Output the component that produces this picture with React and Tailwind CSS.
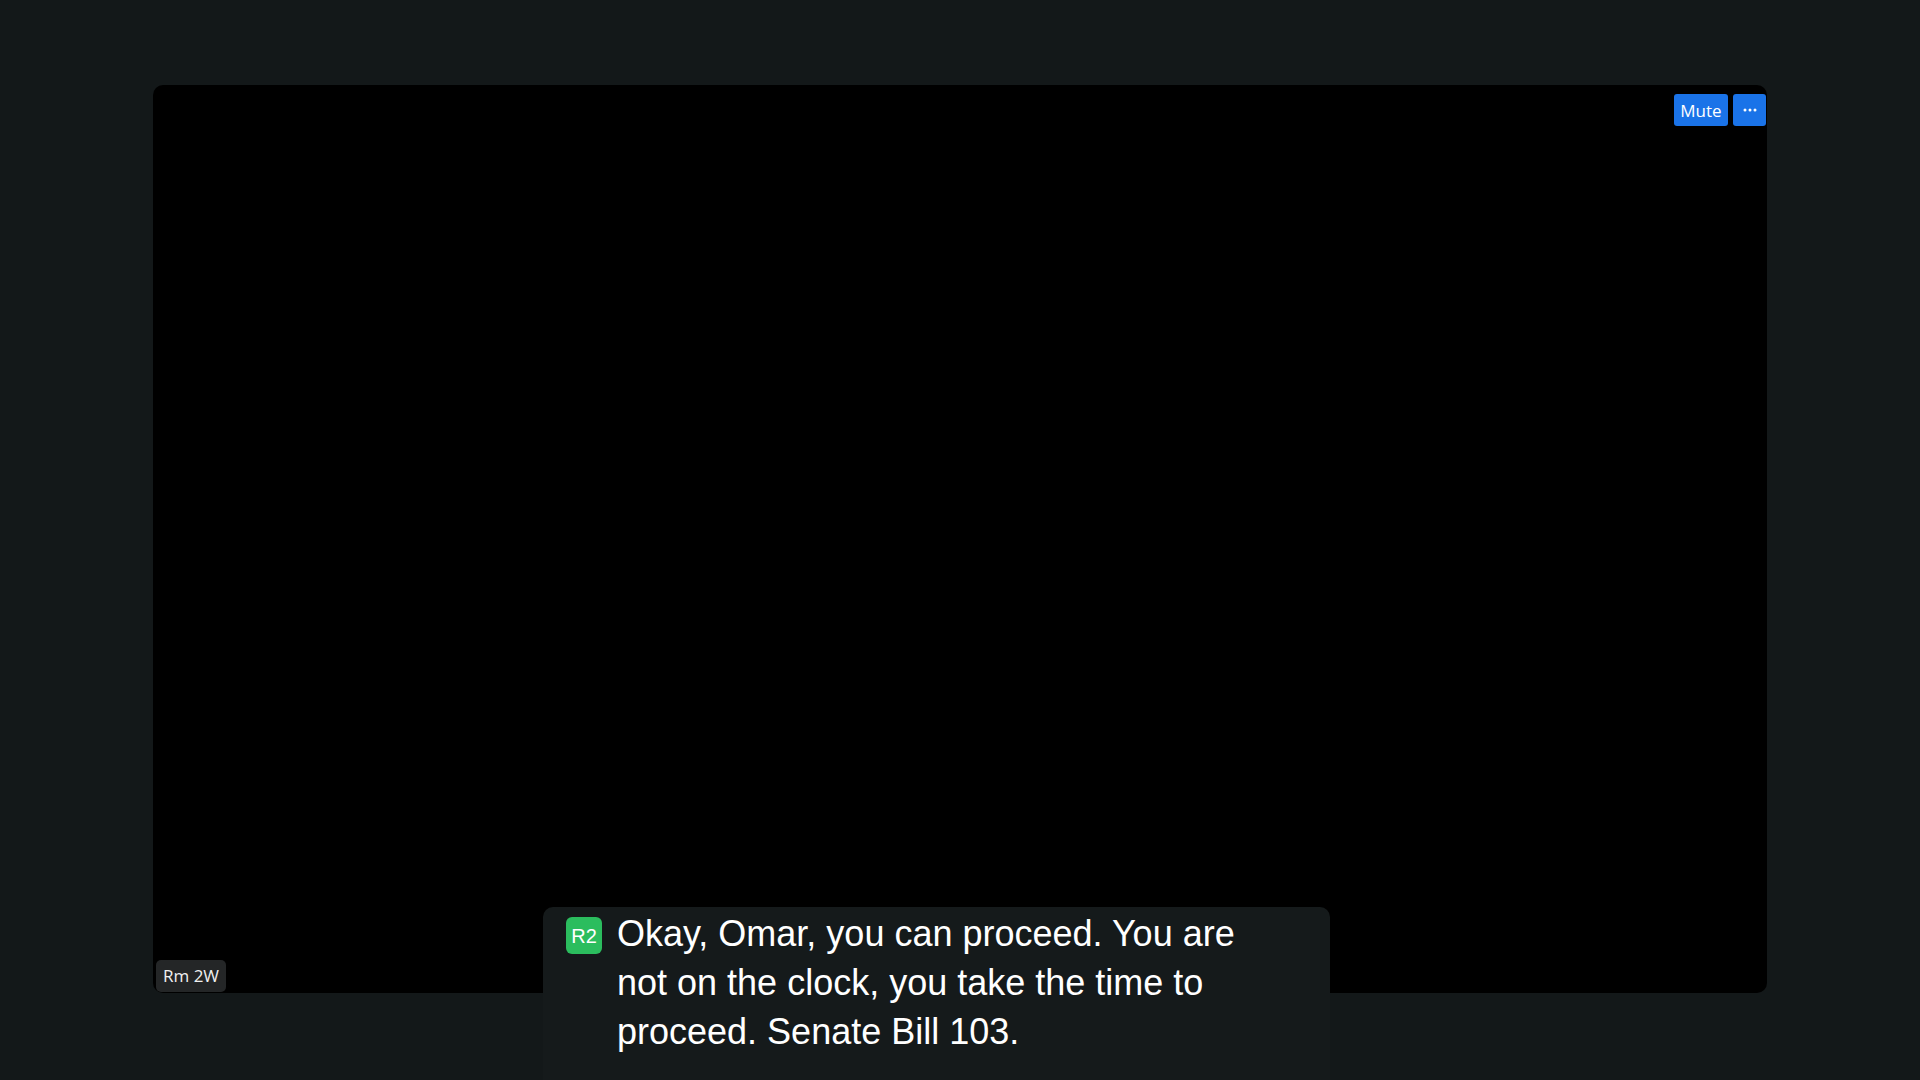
import React from "react";

export default function App() {
  return (
    <div className="relative w-full h-[1080px] overflow-hidden bg-[#131819] pt-[85px] px-[153px]">
      <div className="relative h-[908px] rounded-[10px] bg-black">
        <div className="absolute top-[9px] right-[1px] flex gap-[5px]">
          <button className="h-[32px] w-[54px] rounded-[3px] bg-[#1a73e8] text-white text-[17px] leading-none flex items-center justify-center" style={{ fontFamily: '"Open Sans", "Noto Sans", sans-serif' }}>
            Mute
          </button>
          <button className="h-[32px] w-[33px] rounded-[3px] bg-[#1a73e8] text-white flex items-center justify-center">
            <svg width="14" height="4" viewBox="0 0 14 4" fill="white">
              <circle cx="2" cy="2" r="1.5" />
              <circle cx="7" cy="2" r="1.5" />
              <circle cx="12" cy="2" r="1.5" />
            </svg>
          </button>
        </div>
        <div className="absolute left-[3px] bottom-[1px] h-[32px] px-[7px] rounded-[5px] bg-[#242627] text-[#f0f0f0] text-[17px] flex items-center" style={{ fontFamily: '"Open Sans", "Noto Sans", sans-serif' }}>
          Rm 2W
        </div>
      </div>
      <div className="absolute left-[543px] top-[907px] w-[787px] h-[220px] rounded-[10px] bg-[#151a1b] pl-[23px] pt-[2px] flex items-start gap-[15px]">
        <div className="mt-[8px] w-[36px] h-[37px] shrink-0 rounded-[6px] bg-[#2bbd5e] text-white text-[20px] flex items-center justify-center" style={{ fontFamily: '"Liberation Sans", Arial, sans-serif' }}>
          R2
        </div>
        <p className="w-[660px] text-white text-[36px] leading-[49px]" style={{ fontFamily: '"Liberation Sans", Arial, sans-serif' }}>
          Okay, Omar, you can proceed. You are not on the clock, you take the time to proceed. Senate Bill 103.
        </p>
      </div>
    </div>
  );
}
